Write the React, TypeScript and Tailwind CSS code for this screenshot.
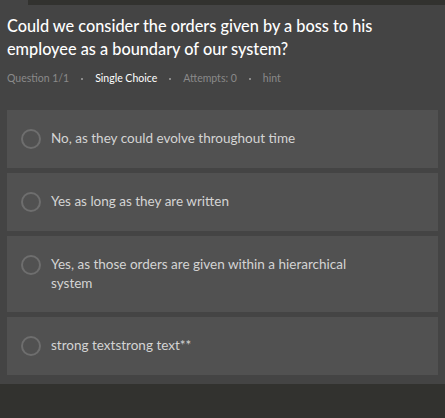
const options = [
  "No, as they could evolve throughout time",
  "Yes as long as they are written",
  "Yes, as those orders are given within a hierarchical system",
  "strong textstrong text**",
]

export default function App() {
  return (
    <div className="w-[445px] h-[418px] bg-[#32322f] font-['Lato',sans-serif]">
      <div className="flex h-[5px]">
        <div className="w-[28px] bg-[#444444]" />
        <div className="flex-1 bg-[#32322f]" />
      </div>
      <div className="bg-[#444444] px-[7px] pt-[9px] pb-[9px]">
        <h1 className="text-[16.3px] leading-[23px] text-white font-medium pr-[40px]">
          Could we consider the orders given by a boss to his employee as a boundary of our system?
        </h1>
        <div className="flex items-center gap-[12px] mt-[11px] text-[10.5px] text-[#8a8a8a]">
          <span>Question 1/1</span>
          <span className="w-[2px] h-[2px] bg-[#8a8a8a]" />
          <span className="text-white">Single Choice</span>
          <span className="w-[2px] h-[2px] bg-[#8a8a8a]" />
          <span>Attempts: 0</span>
          <span className="w-[2px] h-[2px] bg-[#8a8a8a]" />
          <span>hint</span>
        </div>
        <div className="flex flex-col gap-[5px] mt-[23px]">
          {options.map((o, i) => (
            <div key={i} className="bg-[#515151] flex items-start px-[14px] py-[19px]">
              <div className="w-[20px] h-[20px] rounded-full border-2 border-[#6e6e6e] shrink-0" />
              <span className="ml-[10px] text-[13.5px] leading-[19px] text-[#d4d4d4] pr-[70px]">{o}</span>
            </div>
          ))}
        </div>
      </div>
    </div>
  )
}
